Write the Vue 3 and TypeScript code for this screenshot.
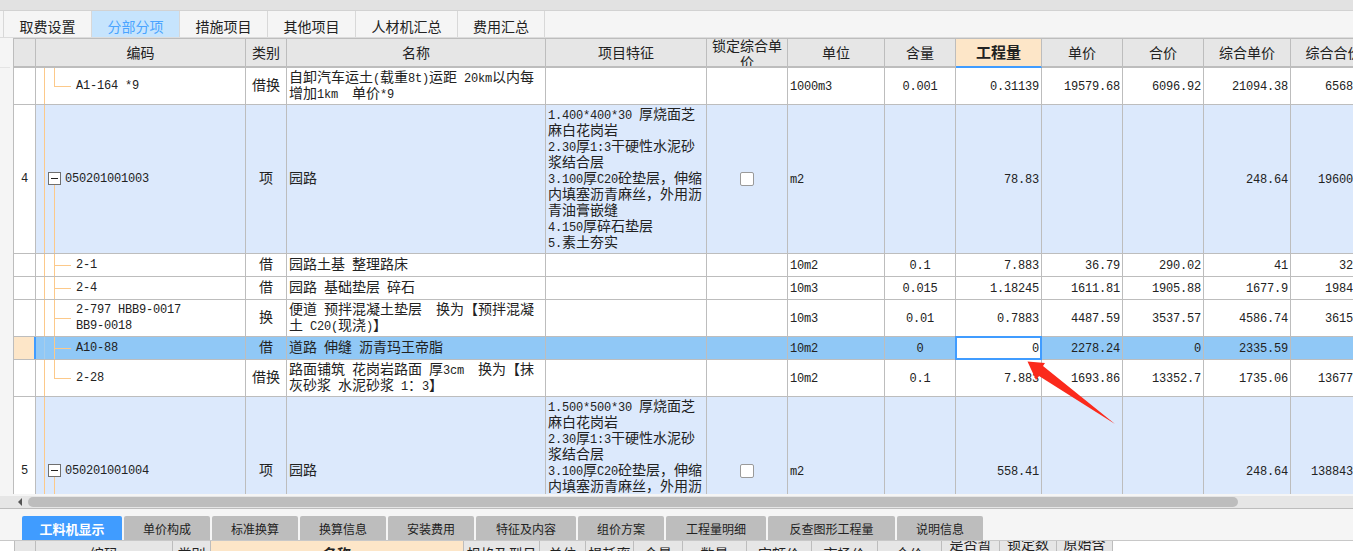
<script setup lang="ts">
interface Row {
  h: number
  kind?: 'item' | 'sel'
  num?: string
  code: string[]
  tree: 'parent' | 'mid' | 'last'
  cells: string[][]
  lock?: boolean
}

const L = (...a: string[]) => a
const feat4 = [
  '1.400*400*30 厚烧面芝', '麻白花岗岩', '2.30厚1:3干硬性水泥砂', '浆结合层',
  '3.100厚C20砼垫层，伸缩', '内填塞沥青麻丝，外用沥', '青油膏嵌缝', '4.150厚碎石垫层', '5.素土夯实',
]
const feat5 = feat4.map((s, i) => (i === 0 ? '1.500*500*30 厚烧面芝' : s))

const headers = ['', '编码', '类别', '名称', '项目特征', '锁定综合单价', '单位', '含量', '工程量', '单价', '合价', '综合单价', '综合合价']

const rows: Row[] = [
  { h: 37, code: L('A1-164 *9'), tree: 'last', cells: [L('借换'), L('自卸汽车运土(载重8t)运距 20km以内每', '增加1km  单价*9'), [], [], L('1000m3'), L('0.001'), L('0.31139'), L('19579.68'), L('6096.92'), L('21094.38'), L('6568')] },
  { h: 149, kind: 'item', num: '4', code: L('050201001003'), tree: 'parent', lock: true, cells: [L('项'), L('园路'), feat4, [], L('m2'), [], L('78.83'), [], [], L('248.64'), L('19600')] },
  { h: 23, code: L('2-1'), tree: 'mid', cells: [L('借'), L('园路土基 整理路床'), [], [], L('10m2'), L('0.1'), L('7.883'), L('36.79'), L('290.02'), L('41'), L('32')] },
  { h: 23, code: L('2-4'), tree: 'mid', cells: [L('借'), L('园路 基础垫层 碎石'), [], [], L('10m3'), L('0.015'), L('1.18245'), L('1611.81'), L('1905.88'), L('1677.9'), L('1984')] },
  { h: 37, code: L('2-797 HBB9-0017', 'BB9-0018'), tree: 'mid', cells: [L('换'), L('便道 预拌混凝土垫层  换为【预拌混凝', '土 C20(现浇)】'), [], [], L('10m3'), L('0.01'), L('0.7883'), L('4487.59'), L('3537.57'), L('4586.74'), L('3615')] },
  { h: 23, kind: 'sel', code: L('A10-88'), tree: 'mid', cells: [L('借'), L('道路 伸缝 沥青玛王帝脂'), [], [], L('10m2'), L('0'), L('0'), L('2278.24'), L('0'), L('2335.59'), []] },
  { h: 37, code: L('2-28'), tree: 'last', cells: [L('借换'), L('路面铺筑 花岗岩路面 厚3cm  换为【抹', '灰砂浆 水泥砂浆 1：3】'), [], [], L('10m2'), L('0.1'), L('7.883'), L('1693.86'), L('13352.7'), L('1735.06'), L('13677')] },
  { h: 149, kind: 'item', num: '5', code: L('050201001004'), tree: 'parent', lock: true, cells: [L('项'), L('园路'), feat5, [], L('m2'), [], L('558.41'), [], [], L('248.64'), L('138843')] },
]

const topTabs = ['取费设置', '分部分项', '措施项目', '其他项目', '人材机汇总', '费用汇总']

const lowerTabs = [
  { t: '工料机显示', w: 100 }, { t: '单价构成', w: 86 }, { t: '标准换算', w: 86 }, { t: '换算信息', w: 86 },
  { t: '安装费用', w: 86 }, { t: '特征及内容', w: 100 }, { t: '组价方案', w: 86 }, { t: '工程量明细', w: 100 },
  { t: '反查图形工程量', w: 127 }, { t: '说明信息', w: 86 },
]

const lowerHeads = [
  { t: '', w: 21 }, { t: '编码', w: 137 }, { t: '类别', w: 38 }, { t: '名称', w: 253, on: true },
  { t: '规格及型号', w: 76 }, { t: '单位', w: 46 }, { t: '损耗率', w: 48 }, { t: '含量', w: 49 },
  { t: '数量', w: 64 }, { t: '定额价', w: 65 }, { t: '市场价', w: 66 }, { t: '合价', w: 64 },
  { t: '是否暂估', w: 58, two: true }, { t: '锁定数量', w: 57, two: true }, { t: '原始含量', w: 57, two: true },
]

function runs(s: string) {
  return s.split(/([\x00-\x7f]+)/).filter(Boolean).map((t) => ({ t, lat: /^[\x00-\x7f]/.test(t) }))
}
</script>

<template>
  <div class="page">
    <div class="topbar"></div>
    <div class="tabs">
      <div v-for="(t, i) in topTabs" :key="t" class="tab" :class="['t' + i, { on: i === 1 }]">{{ t }}</div>
    </div>

    <div class="main">
      <div class="gutter"><div class="gutter-head"></div></div>
      <div class="grid">
        <div class="row head">
          <div v-for="(h, i) in headers" :key="i" class="cell" :class="{ hot: i === 8, wrap: i === 5 }">{{ h }}</div>
        </div>
        <div class="body">
          <div
            v-for="(r, ri) in rows"
            :key="ri"
            class="row"
            :class="r.kind"
            :style="{ height: r.h + 'px' }"
          >
            <div class="cell num"><span class="lat">{{ r.num }}</span></div>
            <div class="cell code" :class="r.tree">
              <i class="v1"></i>
              <i class="v2"></i>
              <i v-if="r.tree !== 'parent'" class="h2"></i>
              <b v-if="r.tree === 'parent'" class="minus"></b>
              <div class="code-text">
                <div v-for="c in r.code" :key="c" class="lat cline">{{ c }}</div>
              </div>
            </div>
            <div
              v-for="(lines, ci) in r.cells"
              :key="ci"
              class="cell"
              :class="['c' + ci, { editing: r.kind === 'sel' && ci === 6 }]"
            >
              <span v-if="ci === 3 && r.lock" class="check"></span>
              <div v-for="(ln, li) in lines" :key="li" class="line">
                <span v-for="(p, pi) in runs(ln)" :key="pi" :class="{ lat: p.lat }">{{ p.t }}</span>
              </div>
            </div>
          </div>
        </div>
        <svg class="arrow" width="90" height="66" viewBox="0 0 90 66">
          <polygon points="0.5,0.5 18,2 16,5 88,63 12,15 9,19" fill="#fb2a1c" />
        </svg>
      </div>
    </div>

    <div class="hscroll">
      <span class="left-arrow"></span>
      <div class="thumb"></div>
    </div>

    <div class="lower-tabs">
      <div
        v-for="(t, i) in lowerTabs"
        :key="t.t"
        class="ltab"
        :class="{ on: i === 0 }"
        :style="{ width: t.w + 'px' }"
      >{{ t.t }}</div>
    </div>

    <div class="lower-head">
      <div
        v-for="(h, i) in lowerHeads"
        :key="i"
        class="lh"
        :class="{ on: h.on, two: h.two }"
        :style="{ width: h.w + 'px' }"
      ><span>{{ h.t }}</span></div>
    </div>
  </div>
</template>

<style>
html, body { margin: 0; overflow: hidden; background: #f5f5f5; }
</style>

<style scoped>
.page {
  width: 1353px;
  height: 551px;
  overflow: hidden;
  background: #f5f5f5;
  color: #222;
  font: 14px/16px "Noto Sans CJK SC", sans-serif;
}
.topbar { height: 10px; background: #e2e2e2; border-bottom: 1px solid #d2d2d2; }
.tabs {
  display: flex;
  height: 26px;
  padding-left: 3px;
  background: #f5f5f5;
  border-bottom: 1px solid #dcdcdc;
}
.tab {
  width: 88px;
  box-sizing: border-box;
  padding-top: 7px;
  text-align: center;
  border-left: 1px solid #d8d8d8;
  color: #222;
}
.tab.t4 { width: 102px; }
.tab.t5 { border-right: 1px solid #d8d8d8; }
.tab.on { background: #c6e4fd; color: #4ba4ff; }

.main { display: flex; height: 456px; }
.gutter { width: 14px; flex: none; border-right: 1px solid #bdbdbd; box-sizing: border-box; }
.gutter-head { height: 29px; width: 10px; border-bottom: 1px solid #e4e4e4; }
.grid { position: relative; flex: 1; min-width: 0; overflow: hidden; background: #fff; }
.body { height: 426px; overflow: hidden; }

.row {
  display: grid;
  grid-template-columns: 22px 210px 41px 259px 161px 81px 97px 71px 86px 81px 81px 87px 86px;
  width: 1400px;
  box-sizing: border-box;
  border-bottom: 1px solid #bdbdbd;
  background: #fff;
}
.row.head {
  height: 30px;
  background: #e6e6e6;
  border-top: 1px solid #bdbdbd;
  border-bottom: 2px solid #bdbdbd;
}
.cell {
  position: relative;
  box-sizing: border-box;
  border-right: 1px solid #bdbdbd;
  min-width: 0;
  overflow: hidden;
  display: flex;
  flex-direction: column;
  justify-content: center;
  white-space: pre;
}
.head .cell { align-items: center; text-align: center; padding-bottom: 2px; }
.head .cell.hot {
  background: #fde6c8;
  font-weight: 700;
  font-size: 15px;
  margin-bottom: -2px;
  border-bottom: 2px solid #409cff;
}
.head .cell.wrap { white-space: normal; line-height: 16px; width: 100%; padding: 0 3px; }

.item { background: #dce9fc; }
.sel { background: #90c8f6; }
.num { background: #fff; text-align: center; align-items: center; }
.sel .num {
  background: #fde6c8;
  border-right: 2px solid #409cff;
}
.line { display: block; height: 16px; position: relative; top: -2px; }
.cline { display: block; height: 16px; }
.lat { font: 12px/16px "Liberation Mono", monospace; white-space: pre; letter-spacing: -0.2px; }

.code { padding-left: 40px; }
.code-text { position: relative; }
.parent { padding-left: 29px; }
.v1, .v2, .h2 { position: absolute; background: #fcc98a; display: block; }
.v1 { left: 8px; top: 0; bottom: 0; width: 1px; }
.v2 { left: 18px; top: 0; bottom: 0; width: 1px; }
.h2 { left: 18px; width: 17px; height: 1px; top: 50%; }
.last .v2 { bottom: 50%; }
.parent .v2 { top: 50%; }
.sel .v1 { background: #a9cde9; }
.minus {
  position: absolute;
  left: 12px;
  top: 50%;
  width: 13px;
  height: 13px;
  margin-top: -7px;
  box-sizing: border-box;
  background: #fff;
  border: 1px solid #6f6f6f;
}
.minus::after {
  content: "";
  position: absolute;
  left: 2px;
  right: 2px;
  top: 5px;
  height: 1px;
  background: #222;
}

.c0, .c3 { align-items: center; text-align: center; }
.c1, .c2, .c4 { padding-left: 2px; }
.c5 { align-items: center; text-align: center; }
.c6, .c7, .c8, .c9, .c10 { align-items: flex-end; padding-right: 2px; text-align: right; }
.c10 { padding-right: 23px; }
.editing {
  background: #fff;
  border: 2px solid #409cff;
  margin: -1px 0 -1px -1px;
  padding-right: 1px;
}
.check {
  width: 14px;
  height: 14px;
  box-sizing: border-box;
  background: #fff;
  border: 1px solid #9a9a9a;
  border-radius: 2px;
}
.arrow { position: absolute; left: 1013px; top: 323px; pointer-events: none; }

.hscroll {
  position: relative;
  height: 14px;
  box-sizing: border-box;
  margin-top: 1px;
  background: #e6e6e6;
  border-top: 1px solid #f5f5f5;
  border-bottom: 1px solid #bdbdbd;
}
.left-arrow {
  position: absolute;
  left: 18px;
  top: 2px;
  border: 4px solid transparent;
  border-left: 0;
  border-right-color: #555;
}
.thumb {
  position: absolute;
  left: 28px;
  top: 1px;
  width: 1210px;
  height: 10px;
  border-radius: 5px;
  background: #bdbdbd;
}
.lower-tabs {
  display: flex;
  gap: 2px;
  height: 25px;
  box-sizing: border-box;
  margin-top: 7px;
  padding-left: 22px;
  border-bottom: 1px solid #c8c8c8;
}
.ltab {
  height: 24px;
  line-height: 26px;
  text-align: center;
  font-size: 12px;
  background: #bdbdbd;
  border-radius: 2px 2px 0 0;
  color: #222;
}
.ltab.on { background: #409cff; color: #fff; font-size: 13px; font-weight: 700; }
.lower-head {
  display: flex;
  padding-left: 14px;
  height: 30px;
  background: #fff;
}
.lh {
  box-sizing: border-box;
  height: 30px;
  padding-top: 4px;
  flex: none;
  text-align: center;
  background: #e6e6e6;
  border-left: 1px solid #bdbdbd;
  white-space: nowrap;
  overflow: hidden;
}
.lh:last-child { border-right: 1px solid #bdbdbd; }
.lh.on { background: #fde6c8; font-weight: 700; }
.lh.two {
  white-space: normal;
  padding: 0 6px;
  line-height: 15px;
}
.lh.two span { display: block; position: relative; top: -5px; }
</style>
